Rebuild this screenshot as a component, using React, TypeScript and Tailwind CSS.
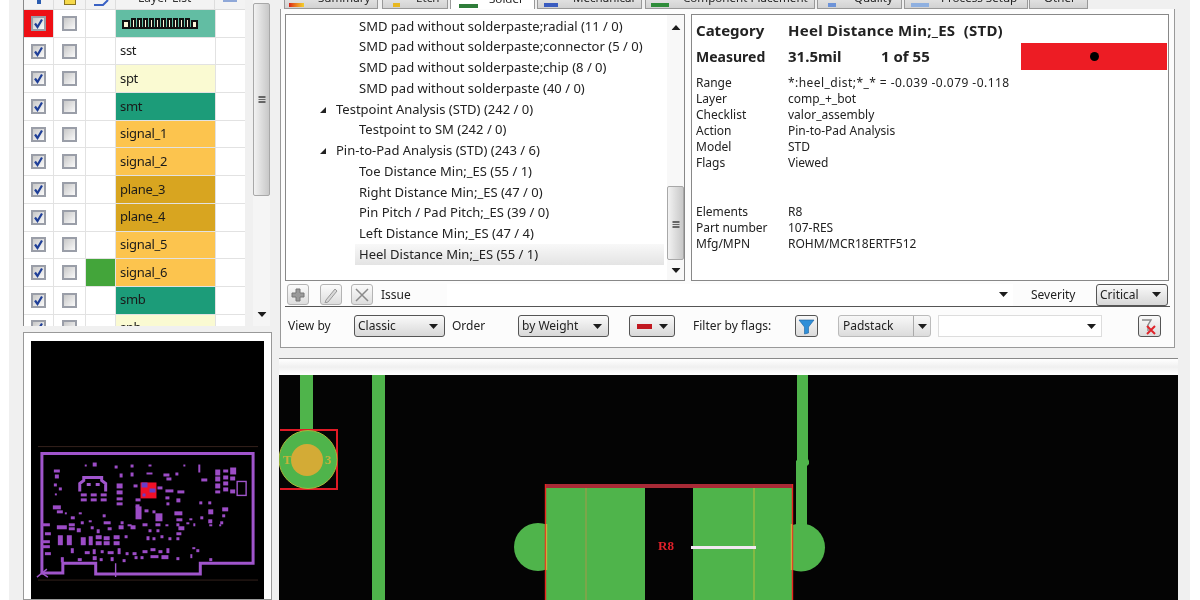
import type { ReactNode } from "react";

const layers = [
  { name: "", bg: "bg-[#62bda3]", stack: true, red: true },
  { name: "sst", bg: "bg-white" },
  { name: "spt", bg: "bg-[#fafad2]" },
  { name: "smt", bg: "bg-[#1c9c79]" },
  { name: "signal_1", bg: "bg-[#fcc44e]" },
  { name: "signal_2", bg: "bg-[#fcc44e]" },
  { name: "plane_3", bg: "bg-[#d8a520]" },
  { name: "plane_4", bg: "bg-[#d8a520]" },
  { name: "signal_5", bg: "bg-[#fcc44e]" },
  { name: "signal_6", bg: "bg-[#fcc44e]", green: true },
  { name: "smb", bg: "bg-[#1c9c79]" },
  { name: "spb", bg: "bg-[#fafad2]" },
];

const tabs = [
  { label: "Summary", box: "w-[94px] pl-[33px]", icon: "left-[4px] w-[15px] bg-gradient-to-r from-[#d81818] to-[#f2d02c]" },
  { label: "Etch", box: "ml-[4px] w-[66px] pl-[33px]", icon: "left-[10px] w-[7px] bg-[#e8b820]" },
  { label: "Solder", box: "ml-[2px] w-[85px] pl-[38px]", icon: "left-[8px] w-[19px] bg-[#2f7d3a]", active: true },
  { label: "Mechanical", box: "ml-[2px] w-[105px] pl-[35px]", icon: "left-[6px] w-[14px] bg-[#3a5cc0]" },
  { label: "Component Placement", box: "ml-[3px] w-[170px] pl-[37px]", icon: "left-[5px] w-[18px] bg-[#2f8d3a]" },
  { label: "Quality", box: "ml-[2px] w-[85px] pl-[36px]", icon: "left-[10px] w-[8px] bg-[#6d93d8]" },
  { label: "Process Setup", box: "ml-[2px] w-[124px] pl-[36px]", icon: "left-[6px] w-[18px] bg-[#8fb0e0]" },
  { label: "Other", box: "ml-px w-[59px] pl-[14px]" },
];

const tree = [
  { text: "SMD pad without solderpaste;radial (11 / 0)" },
  { text: "SMD pad without solderpaste;connector (5 / 0)" },
  { text: "SMD pad without solderpaste;chip (8 / 0)" },
  { text: "SMD pad without solderpaste (40 / 0)" },
  { text: "Testpoint Analysis (STD) (242 / 0)", parent: true },
  { text: "Testpoint to SM (242 / 0)" },
  { text: "Pin-to-Pad Analysis (STD) (243 / 6)", parent: true },
  { text: "Toe Distance Min;_ES (55 / 1)" },
  { text: "Right Distance Min;_ES (47 / 0)" },
  { text: "Pin Pitch / Pad Pitch;_ES (39 / 0)" },
  { text: "Left Distance Min;_ES (47 / 4)" },
  { text: "Heel Distance Min;_ES (55 / 1)", selected: true },
];

const info = [
  ["Range", "*:heel_dist;*_* = -0.039 -0.079 -0.118"],
  ["Layer", "comp_+_bot"],
  ["Checklist", "valor_assembly"],
  ["Action", "Pin-to-Pad Analysis"],
  ["Model", "STD"],
  ["Flags", "Viewed"],
];

const element = [
  ["Elements", "R8"],
  ["Part number", "107-RES"],
  ["Mfg/MPN", "ROHM/MCR18ERTF512"],
];

// rough copy of the board's pads for the overview
const blocks = [
  [92, 463, 4, 4], [114, 466, 3, 3], [130, 465, 3, 3], [84, 465, 2, 2], [148, 465, 3, 2], [183, 465, 2, 2],
  [53, 470, 6, 3], [54, 475, 4, 4], [119, 474, 3, 4], [130, 473, 3, 4], [146, 473, 6, 2], [175, 473, 3, 3],
  [163, 474, 6, 3], [166, 478, 5, 3], [198, 465, 2, 8], [230, 468, 6, 7], [215, 470, 5, 6], [223, 470, 5, 3],
  [53, 484, 3, 3], [58, 488, 3, 3], [54, 494, 2, 2], [116, 484, 6, 5], [116, 491, 6, 4], [133, 485, 4, 3],
  [157, 487, 5, 3], [165, 490, 8, 3], [177, 491, 7, 3], [201, 479, 6, 3], [215, 477, 5, 5], [215, 484, 5, 5],
  [215, 491, 5, 3], [223, 476, 5, 4], [223, 482, 5, 4], [223, 488, 5, 4], [230, 477, 5, 4], [230, 490, 5, 4],
  [80, 494, 6, 3], [80, 499, 6, 3], [90, 494, 6, 3], [90, 499, 6, 3], [100, 494, 6, 3], [100, 499, 6, 3],
  [116, 498, 6, 3], [116, 503, 6, 3], [135, 499, 5, 3], [135, 505, 4, 3], [165, 497, 4, 3], [166, 503, 3, 3],
  [176, 499, 4, 4], [199, 502, 3, 3], [208, 502, 3, 3], [208, 510, 5, 5], [222, 508, 6, 4], [222, 515, 3, 3],
  [52, 506, 8, 4], [56, 511, 6, 3], [135, 507, 6, 13], [144, 510, 4, 3], [152, 511, 3, 3], [174, 512, 8, 4],
  [155, 514, 7, 8], [176, 519, 6, 3], [189, 519, 3, 2], [200, 517, 3, 3], [208, 520, 4, 4], [220, 522, 3, 3],
  [64, 513, 2, 2], [70, 517, 4, 3], [78, 513, 3, 2], [68, 524, 6, 3], [80, 522, 3, 3], [88, 521, 3, 2],
  [102, 515, 3, 3], [103, 522, 7, 3], [120, 522, 3, 3], [127, 525, 4, 2], [142, 524, 5, 3], [155, 524, 5, 3],
  [165, 525, 3, 2], [176, 524, 3, 3], [186, 523, 3, 2], [193, 524, 2, 3], [209, 525, 3, 2], [219, 525, 2, 2],
  [56, 526, 10, 4], [68, 528, 6, 3], [76, 529, 4, 4], [90, 527, 3, 3], [96, 530, 3, 4], [107, 528, 4, 3],
  [118, 526, 5, 4], [130, 526, 5, 4], [148, 530, 3, 3], [156, 530, 3, 3], [178, 527, 6, 4], [176, 533, 5, 3],
  [57, 536, 5, 10], [66, 536, 5, 10], [80, 538, 5, 8], [88, 537, 4, 9], [95, 536, 6, 4], [95, 542, 6, 4],
  [103, 537, 6, 4], [103, 542, 6, 4], [113, 536, 6, 4], [113, 542, 6, 4], [124, 536, 3, 3], [146, 537, 3, 4],
  [152, 538, 3, 3], [160, 536, 3, 3], [168, 538, 3, 3], [176, 538, 3, 3], [70, 549, 3, 5], [84, 552, 5, 3],
  [92, 550, 3, 5], [100, 551, 3, 3], [107, 552, 6, 3], [117, 549, 3, 6], [125, 553, 3, 3], [132, 553, 4, 3],
  [142, 551, 5, 3], [150, 549, 5, 3], [158, 551, 4, 3], [166, 549, 3, 5], [150, 556, 8, 3], [161, 556, 7, 4],
  [192, 548, 3, 2], [196, 550, 3, 3], [60, 558, 3, 5], [77, 559, 4, 3], [92, 557, 4, 4], [110, 558, 3, 4],
  [122, 560, 3, 3], [140, 557, 3, 3], [176, 558, 3, 3], [190, 555, 2, 4], [41, 524, 8, 3], [44, 533, 6, 3],
  [41, 541, 8, 3], [44, 553, 6, 3], [41, 546, 8, 3], [134, 557, 3, 3], [99, 559, 3, 3], [209, 559, 3, 3],
];

function Caret({ up, className }: { up?: boolean; className?: string }) {
  return (
    <svg width="9" height="5" viewBox="0 0 9 5" className={className}>
      <path d={up ? "M4.5 0 9 5H0z" : "M0 0h9L4.5 5z"} fill="#1c1c1c" />
    </svg>
  );
}

function Checkbox({ checked }: { checked?: boolean }) {
  return (
    <span className="flex size-[15px] items-center justify-center border-2 border-[#9a9ea8] bg-gradient-to-br from-[#c8c8c8] to-[#fafafa]">
      {checked ? (
        <svg width="11" height="11" viewBox="0 0 11 11">
          <path d="M2 5.5 4.5 9 9 1.5" stroke="#1f3f98" strokeWidth="2.2" fill="none" />
        </svg>
      ) : null}
    </span>
  );
}

function Select({ label, className, children }: { label?: string; className: string; children?: ReactNode }) {
  return (
    <div
      className={`flex h-[22px] items-center justify-between rounded-[3px] border border-[#555] bg-gradient-to-b from-[#fafafa] to-[#d8d8d8] pl-[3px] pr-[6px] ${className}`}
    >
      {label ? <span>{label}</span> : null}
      {children}
      <Caret />
    </div>
  );
}

function ToolButton({ children }: { children: ReactNode }) {
  return (
    <div className="flex h-[21px] w-[22px] items-center justify-center rounded-[3px] border border-[#b4b4b4] bg-gradient-to-b from-[#fbfbfb] to-[#dedede]">
      {children}
    </div>
  );
}

function Scrollbar({ className, thumb, grip }: { className: string; thumb: string; grip: string }) {
  return (
    <div className={`relative bg-[#f5f5f5] ${className}`}>
      <div className={`absolute inset-x-0 rounded-[2px] border border-[#a8a8a8] bg-gradient-to-r from-[#f2f2f2] to-[#c8c8c8] ${thumb}`} />
      <div className={`absolute left-1/2 h-[7px] w-[7px] -translate-x-1/2 border-y border-[#666] bg-[linear-gradient(#666_1px,transparent_1px)] bg-[length:7px_2px] ${grip}`} />
      <Caret className="absolute bottom-[9px] left-1/2 -translate-x-1/2" />
    </div>
  );
}

function LayerTable() {
  return (
    <div className="w-[222px] border-l border-[#888] bg-white">
      <div className="flex h-[10px] overflow-hidden border-b border-[#ddd] bg-[#f3f3f3] text-[12px] leading-[8px] text-[#333]">
        <div className="flex w-[30px] justify-center border-r border-[#ddd]">
          <span className="mt-[-4px] h-[8px] w-[4px] bg-[#2a5cb0]" />
        </div>
        <div className="flex w-[32px] justify-center border-r border-[#ddd]">
          <span className="mt-[-4px] h-[9px] w-[12px] border border-[#8a7420] bg-[#f6d94a]" />
        </div>
        <div className="flex w-[30px] justify-center border-r border-[#ddd]">
          <svg width="16" height="6" viewBox="0 0 16 6">
            <path d="M1 5h9l5-5" stroke="#3a62c4" strokeWidth="2" fill="none" />
          </svg>
        </div>
        <div className="mt-[-6px] w-[99px] whitespace-nowrap border-r border-[#ddd] pl-[22px]">Layer List</div>
        <div className="flex flex-1 justify-center">
          <span className="h-[2px] w-[14px] bg-[#8fa8d8]" />
        </div>
      </div>
      {layers.map((l) => (
        <div key={l.name} className="flex h-[27.7px] border-b border-[#e2e2e2] text-[13px] tracking-[-0.3px] text-[#1a1a1a]">
          <div className={`flex w-[30px] items-center justify-center border-r border-[#e2e2e2] ${l.red ? "bg-[#ee0f14]" : ""}`}>
            <Checkbox checked />
          </div>
          <div className="flex w-[32px] items-center justify-center border-r border-[#e2e2e2]">
            <Checkbox />
          </div>
          <div className={`w-[30px] border-r border-[#e2e2e2] ${l.green ? "bg-[#43a53a]" : ""}`} />
          <div className={`flex w-[99px] items-center pl-[4px] ${l.bg}`}>
            {l.stack ? (
              <svg width="86" height="14" viewBox="0 0 86 14" className="ml-[2px]">
                <path
                  d="M1 12V5h6v7h3V3h3v9h3V3h3v9h3V3h3v9h3V3h3v9h3V3h3v9h3V3h3v9h3V3h3v9h3V3h3v9h3V3h3v9h3V3h3v9h3V5h5v7z"
                  fill="#fff5d8"
                  stroke="#111"
                  strokeWidth="2"
                />
              </svg>
            ) : (
              l.name
            )}
          </div>
          <div className="flex-1 border-l border-[#e2e2e2]" />
        </div>
      ))}
    </div>
  );
}

function Minimap() {
  return (
    <svg viewBox="31 341 232 259" className="block h-full w-full bg-black">
      <path d="M37 447h221M37 581h221" stroke="#4a3028" strokeWidth="0.7" />
      <path d="M41 574V454h212v110h-53v11H95v-11H62v10z" fill="none" stroke="#a055cc" strokeWidth="3" />
      <path d="M79 492v-8l4-3v-3h18v3l4 3v8M86 485h4M95 485h4" fill="none" stroke="#a055cc" strokeWidth="3" />
      <rect x="237" y="482" width="9" height="14" fill="none" stroke="#a055cc" strokeWidth="1.4" />
      <path d="M115 564v14M41 574l5-4M41 574l6 4M36 578l5-4" stroke="#a055cc" strokeWidth="1.4" />
      {blocks.map(([x, y, w, h], i) => (
        <rect key={i} x={x} y={y} width={w} height={h} fill="#9c4cc6" />
      ))}
      <rect x="140" y="483" width="16" height="16" fill="#f01028" />
      <path d="M141 483h6v5h-6zM149 489h6v4h-6zM142 494h3v3h-3z" fill="#6a3cc8" />
    </svg>
  );
}

function Board() {
  const green = "#4fb44b";
  return (
    <svg viewBox="279 375 899 225" className="block h-[225px] w-[899px] bg-[#040404]">
      <rect x="300" y="375" width="13" height="60" fill={green} />
      <rect x="372" y="375" width="13" height="225" fill={green} />
      <path d="M280 430h57v59h-57" fill="none" stroke="#e01a26" strokeWidth="2" />
      <circle cx="308" cy="459.5" r="29" fill={green} stroke="#a8b63a" strokeWidth="1" />
      <circle cx="307" cy="460" r="16" fill="#d3ab36" />
      <text x="283" y="464" fontSize="13" fontWeight="700" fill="#c6b23c" fontFamily="'Liberation Serif', serif">T</text>
      <text x="325" y="464" fontSize="13" fontWeight="700" fill="#c6b23c" fontFamily="'Liberation Serif', serif">3</text>

      <path d="M797 375h11v84l1 2v3l-2 2v70h-11v-75l1-1z" fill={green} />
      <circle cx="538" cy="547" r="24" fill={green} />
      <circle cx="801" cy="547.5" r="24" fill={green} />

      <rect x="545" y="484" width="248" height="4" fill="#a82a36" />
      <rect x="546" y="488" width="99" height="112" fill={green} />
      <rect x="693" y="488" width="99" height="112" fill={green} />
      <path d="M545.5 484v116M792.5 484v116" stroke="#e8261e" strokeWidth="1.4" />
      <path d="M546.5 524v46M791.5 524v46" stroke="#c6b23c" strokeWidth="1.4" />
      <path d="M586 488v112" stroke="#a8984a" strokeWidth="1" />
      <path d="M754 488v112" stroke="#b8c03c" strokeWidth="1" />
      <text x="658" y="550" fontSize="13" fontWeight="700" fill="#e0202a" fontFamily="'Liberation Serif', serif">R8</text>
      <rect x="691" y="546" width="65" height="3" fill="#f2e8f2" />
    </svg>
  );
}

export default function App() {
  return (
    <div className="flex h-[600px] w-[1200px] overflow-hidden bg-white font-['Noto_Sans',sans-serif] text-[#222] blur-[0.5px]">
      <div className="ml-[9px] flex h-full w-[1181px] bg-[#f0f0f0]">
        {/* layers + overview */}
        <div className="flex w-[263px] shrink-0 flex-col pl-[14px]">
          <div className="flex h-[326px] overflow-hidden">
            <LayerTable />
            <Scrollbar className="ml-[8px] h-full w-[17px]" thumb="top-[3px] h-[193px]" grip="top-[96px]" />
          </div>
          <div className="mt-[6px] min-h-0 flex-1 border border-[#999] bg-white px-[7px] pt-[8px]">
            <Minimap />
          </div>
        </div>

        {/* main area */}
        <div className="ml-[7px] flex w-[899px] shrink-0 flex-col">
          <div className="flex h-[9px] items-end pl-[5px] text-[11.6px]">
            {tabs.map((t) => (
              <div
                key={t.label}
                className={`relative flex h-[9px] shrink-0 items-end overflow-hidden border-x border-[#999] ${t.box} ${
                  t.active ? "bg-white" : "border-b bg-gradient-to-b from-[#e0e0e0] to-[#d2d2d2]"
                }`}
              >
                {t.icon ? <span className={`absolute bottom-[1px] h-[4px] ${t.icon}`} /> : null}
                <span className="mb-[3px] whitespace-nowrap leading-[14px]">{t.label}</span>
              </div>
            ))}
          </div>

          <div className="ml-px flex h-[339px] w-[895px] flex-col border border-t-0 border-[#999] bg-[#fcfcfc]">
            <div className="ml-[4px] mt-[5px] flex h-[267px] gap-[6px]">
              <div className="flex w-[400px] border border-[#888] bg-white text-[13.03px]">
                <div className="mt-px min-w-0 flex-1 pr-[3px]">
                  {tree.map((row) => (
                    <div
                      key={row.text}
                      className={`flex h-[20.75px] items-center whitespace-nowrap ${
                        row.parent ? "pl-[32px]" : "ml-[69px] pl-[4px]"
                      } ${row.selected ? "bg-gradient-to-b from-[#f8f8f8] to-[#e4e4e4]" : ""}`}
                    >
                      {row.parent ? (
                        <svg width="18" height="7" viewBox="0 0 18 7" className="shrink-0">
                          <path d="M2 7 8 1v6z" fill="#222" />
                        </svg>
                      ) : null}
                      {row.text}
                    </div>
                  ))}
                </div>
                <div className="relative w-[17px] shrink-0 bg-[#f8f8f8]">
                  <Caret up className="absolute left-1/2 top-[10px] -translate-x-1/2" />
                  <div className="absolute inset-x-0 top-[171px] h-[74px] rounded-[2px] border border-[#a8a8a8] bg-gradient-to-r from-[#f2f2f2] to-[#c8c8c8]" />
                  <div className="absolute left-1/2 top-[206px] h-[7px] w-[7px] -translate-x-1/2 border-y border-[#666] bg-[linear-gradient(#666_1px,transparent_1px)] bg-[length:7px_2px]" />
                  <Caret className="absolute bottom-[7px] left-1/2 -translate-x-1/2" />
                </div>
              </div>

              <div className="w-[478px] border border-[#888] bg-white pl-[4px] pt-[4px] text-[12px]">
                <div className="flex h-[22px] items-center whitespace-nowrap text-[15px] font-bold">
                  <span className="w-[92px]">Category</span>
                  <span className="tracking-[0.25px]">Heel Distance Min;_ES&nbsp;&nbsp;(STD)</span>
                </div>
                <div className="mt-[2px] flex h-[27px] items-center whitespace-nowrap text-[15px] font-bold">
                  <span className="w-[92px] text-[14px]">Measured</span>
                  <span className="w-[93px]">31.5mil</span>
                  <span>1 of 55</span>
                  <div className="ml-auto mr-px flex h-[27px] w-[146px] items-center justify-center bg-[#ed1c24]">
                    <span className="size-[9px] rounded-full bg-black" />
                  </div>
                </div>
                <div className="mt-[5px]">
                  {info.map(([k, v], i) => (
                    <div key={k} className="flex h-[16px] items-center whitespace-nowrap">
                      <span className="w-[92px]">{k}</span>
                      <span className={i === 0 ? "tracking-[0.45px]" : ""}>{v}</span>
                    </div>
                  ))}
                </div>
                <div className="mt-[33px]">
                  {element.map(([k, v]) => (
                    <div key={k} className="flex h-[16px] items-center whitespace-nowrap">
                      <span className="w-[92px]">{k}</span>
                      <span>{v}</span>
                    </div>
                  ))}
                </div>
              </div>
            </div>

            <div className="ml-[4px] mt-[2px] flex h-[24px] w-[885px] items-center border-b border-[#555] pl-[2px] text-[12px]">
              <ToolButton>
                <svg width="14" height="14" viewBox="0 0 14 14">
                  <path d="M5 1h4v4h4v4H9v4H5V9H1V5h4z" fill="#9a9a9a" stroke="#777" />
                </svg>
              </ToolButton>
              <div className="ml-[11px]">
                <ToolButton>
                  <svg width="16" height="16" viewBox="0 0 16 16">
                    <path d="M3 13 12 2l2 2-9 11-3 1z" fill="#d8d8d8" stroke="#999" />
                  </svg>
                </ToolButton>
              </div>
              <div className="ml-[9px]">
                <ToolButton>
                  <svg width="16" height="16" viewBox="0 0 16 16">
                    <path d="M2 2l12 12M14 2 2 14" stroke="#8a8a8a" strokeWidth="1.5" />
                  </svg>
                </ToolButton>
              </div>
              <span className="ml-[8px] w-[66px]">Issue</span>
              <div className="flex h-[22px] w-[566px] items-center justify-end bg-white pr-[5px]">
                <Caret />
              </div>
              <span className="ml-[18px] w-[65px]">Severity</span>
              <Select label="Critical" className="w-[72px]" />
            </div>

            <div className="ml-[7px] mt-[8px] flex items-center text-[12px]">
              <span className="w-[66px]">View by</span>
              <Select label="Classic" className="w-[91px]" />
              <span className="ml-[7px] w-[66px]">Order</span>
              <Select label="by Weight" className="w-[91px]" />
              <Select className="ml-[20px] w-[46px]">
                <span className="ml-[4px] h-[5px] w-[15px] bg-[#c01820]" />
              </Select>
              <span className="ml-[18px] w-[102px]">Filter by flags:</span>
              <div className="flex h-[22px] w-[23px] items-center justify-center rounded-[3px] border border-[#555] bg-gradient-to-b from-[#f8f8f8] to-[#dcdcdc]">
                <svg width="17" height="17" viewBox="0 0 17 17">
                  <path d="M1 2h15l-5.5 7v6l-4 1V9z" fill="#2f8fd8" stroke="#1a5fa0" strokeWidth="0.6" />
                </svg>
              </div>
              <div className="ml-[20px] flex h-[22px] w-[93px] items-center rounded-[3px] border border-[#bbb] bg-gradient-to-b from-[#f8f8f8] to-[#dcdcdc] pl-[4px]">
                <span className="w-[70px]">Padstack</span>
                <span className="flex h-full flex-1 items-center justify-center border-l border-[#aaa]">
                  <Caret />
                </span>
              </div>
              <div className="ml-[7px] flex h-[22px] w-[164px] items-center justify-end border border-[#ddd] bg-white pr-[5px]">
                <Caret />
              </div>
              <div className="ml-[36px] flex h-[22px] w-[23px] items-center justify-center rounded-[3px] border border-[#555] bg-gradient-to-b from-[#fafafa] to-[#dcdcdc]">
                <svg width="17" height="17" viewBox="0 0 17 17">
                  <path d="M1 2h9L7 7v6" fill="none" stroke="#888" strokeWidth="1.4" />
                  <path d="M6 8l8 8M14 8l-8 8" stroke="#e0242a" strokeWidth="2" />
                </svg>
              </div>
            </div>
          </div>

          <div className="h-[11px] shrink-0 border-b border-[#888]" />
          <div className="h-[16px] shrink-0 bg-gradient-to-b from-white via-[#f0f0f0] to-white" />
          <Board />
        </div>
      </div>
    </div>
  );
}
